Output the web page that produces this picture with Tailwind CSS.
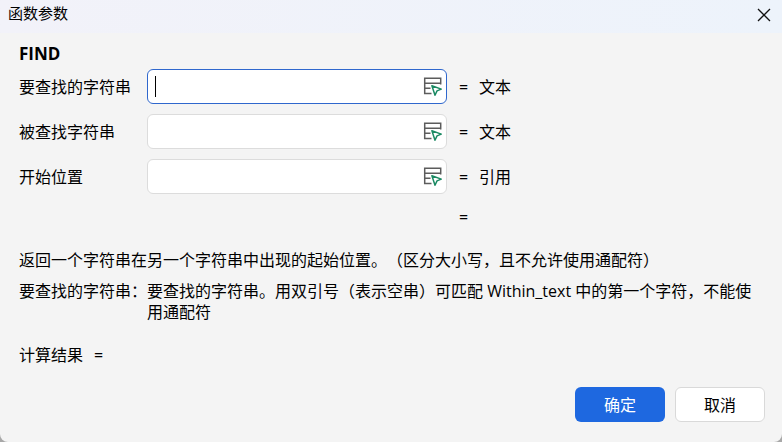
<!DOCTYPE html>
<html lang="zh-CN">
<head>
  <meta charset="UTF-8" />
  <meta name="viewport" content="width=device-width, initial-scale=1.0" />
  <title>函数参数</title>
  <script src="https://cdn.jsdelivr.net/npm/@tailwindcss/browser@4"></script>
</head>
<body class="min-h-screen bg-[#a8a8a8] font-['Open_Sans','Noto_Sans_CJK_SC',sans-serif] text-base text-black">

  <div role="dialog" aria-labelledby="title" class="flex min-h-screen flex-col overflow-hidden rounded-b-lg bg-[#f4f4f4] [text-spacing-trim:space-all]">

    <header class="flex h-[33px] items-center justify-between bg-linear-to-r from-[#f2f2f9] to-[#edf3fb] px-2">
      <h1 id="title" class="pb-2 text-[15px] leading-5">函数参数</h1>
      <button type="button" aria-label="关闭" class="flex size-5 items-center justify-center pb-1">
        <svg class="size-3 overflow-visible" viewBox="0 0 12 12" fill="none" stroke="#111" stroke-width="1.3">
          <path d="M0 0l12 12M12 0L0 12" />
        </svg>
      </button>
    </header>

    <!-- icon shared by the range pickers -->
    <svg class="hidden">
      <symbol id="picker" viewBox="0 0 20 20" fill="none">
        <path d="M9.5 17.5H2.7V2.2h16v6.3M2.7 7.2h16M2.7 12.3h5.8" stroke="#5c5c5c" stroke-width="1.5" />
        <path d="M9.9 9.8l9.4 3.3-4.3 1.8-2 4.3z" stroke="#1b8a63" stroke-width="1.5" stroke-linejoin="round" />
      </symbol>
    </svg>

    <main class="flex grow flex-col px-[19px] pt-[11px]">
      <h2 class="text-[17px] leading-5 font-bold">FIND</h2>

      <form class="mt-[5px] flex flex-col gap-2.5">
        <div class="flex items-center">
          <label for="find_text" class="w-32 shrink-0">要查找的字符串</label>
          <div class="relative w-[300px]">
            <input id="find_text" type="text" class="block h-[35px] w-full rounded-md border border-[#2f67cd] bg-white pr-8 pl-2 caret-transparent outline-none" />
            <span class="absolute top-[7px] left-2 h-[21px] w-px bg-black"></span>
            <button type="button" aria-label="选择区域" class="absolute top-[7px] right-[5px]"><svg class="size-5"><use href="#picker" /></svg></button>
          </div>
          <span class="w-8 pl-3">=</span>
          <span>文本</span>
        </div>
        <div class="flex items-center">
          <label for="within_text" class="w-32 shrink-0">被查找字符串</label>
          <div class="relative w-[300px]">
            <input id="within_text" type="text" class="block h-[35px] w-full rounded-md border border-[#dcdcdc] bg-white pr-8 pl-2 outline-none" />
            <button type="button" aria-label="选择区域" class="absolute top-[7px] right-[5px]"><svg class="size-5"><use href="#picker" /></svg></button>
          </div>
          <span class="w-8 pl-3">=</span>
          <span>文本</span>
        </div>
        <div class="flex items-center">
          <label for="start_num" class="w-32 shrink-0">开始位置</label>
          <div class="relative w-[300px]">
            <input id="start_num" type="text" class="block h-[35px] w-full rounded-md border border-[#dcdcdc] bg-white pr-8 pl-2 outline-none" />
            <button type="button" aria-label="选择区域" class="absolute top-[7px] right-[5px]"><svg class="size-5"><use href="#picker" /></svg></button>
          </div>
          <span class="w-8 pl-3">=</span>
          <span>引用</span>
        </div>
        <div class="pl-[440px] leading-[26px]">=</div>
      </form>

      <p class="mt-5 leading-[21px]">返回一个字符串在另一个字符串中出现的起始位置。（区分大小写，且不允许使用通配符）</p>
      <div class="mt-2.5 flex leading-[21px]">
        <span class="w-32 shrink-0">要查找的字符串：</span>
        <p>要查找的字符串。用双引号（表示空串）可匹配 Within_text 中的第一个字符，不能使用通配符</p>
      </div>
      <p class="mt-[22px] flex gap-[11px] leading-[21px]"><span>计算结果</span><span>=</span></p>
    </main>

    <footer class="flex justify-end gap-2.5 px-[17px] pb-5">
      <button type="button" class="h-[35px] w-[90px] rounded-md bg-[#1e68e0] text-white">确定</button>
      <button type="button" class="h-[35px] w-[90px] rounded-md border border-[#d9d9d9] bg-white">取消</button>
    </footer>
  </div>

</body>
</html>
